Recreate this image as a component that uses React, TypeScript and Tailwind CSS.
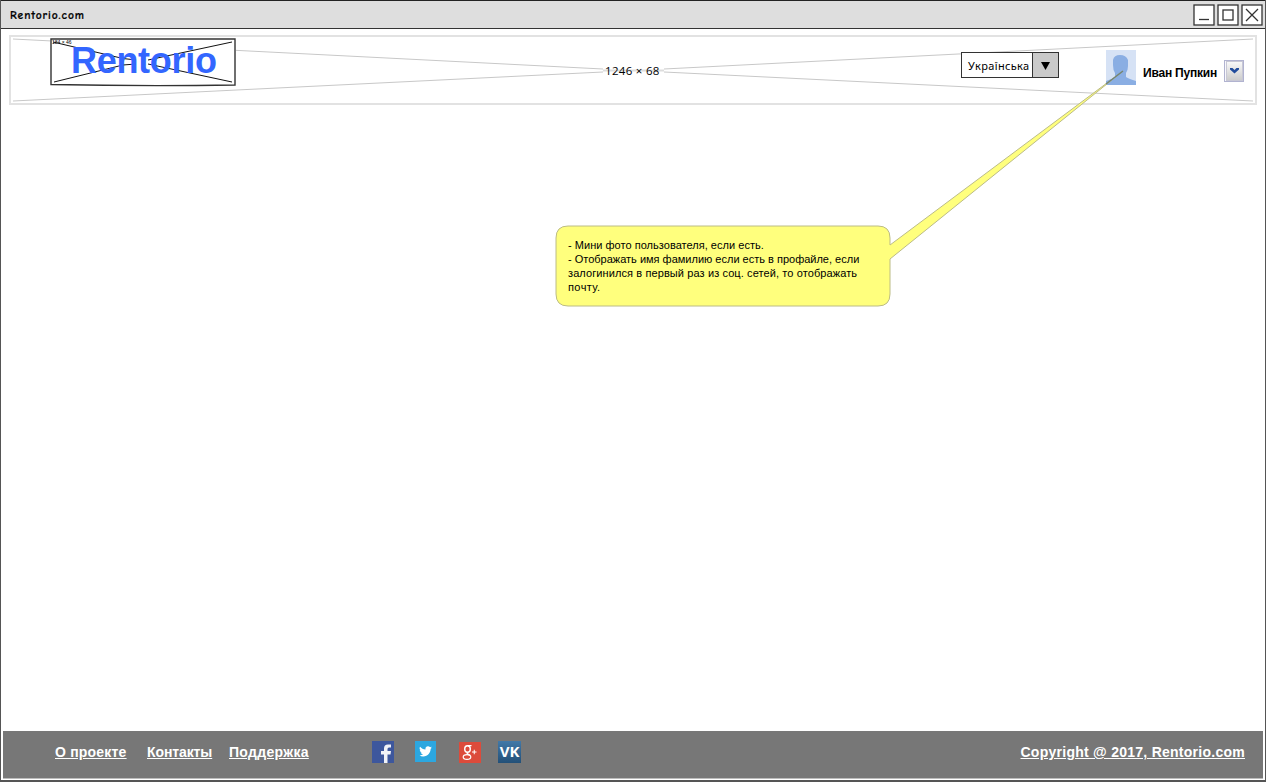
import React from "react";

function WindowButton({ kind }: { kind: "min" | "max" | "close" }) {
  return (
    <svg width="22" height="22" viewBox="0 0 22 22" fill="none" stroke="#333" strokeWidth="1.3">
      <rect x="1" y="1" width="20" height="20" fill="#fff" />
      {kind === "min" && <path d="M6 15.5H16" />}
      {kind === "max" && <rect x="6" y="6" width="10" height="10" />}
      {kind === "close" && <path d="M5 5L17 17M17 5L5 17" />}
    </svg>
  );
}

function TitleBar() {
  return (
    <div className="flex h-[29px] items-center justify-between border-t border-b border-t-[#222] border-b-[#333] bg-[#dedede] pr-[2px] pl-[9px]">
      <span className="pt-[3px] font-['Comic_Neue','Open_Sans',sans-serif] text-[11.5px] leading-[14px] font-bold tracking-[0.9px] text-black [-webkit-text-stroke:0.2px_black]">
        Rentorio.com
      </span>
      <div className="flex gap-[2px]">
        <WindowButton kind="min" />
        <WindowButton kind="max" />
        <WindowButton kind="close" />
      </div>
    </div>
  );
}

function Logo() {
  return (
    <div className="relative h-[48px] w-[186px] bg-white">
      <svg className="absolute inset-0" width="186" height="49" fill="none" stroke="#111" strokeWidth="1">
        <path d="M3 4L73 20.500L86 22M98 22L182 4M4 44L73 27L86 26M98 26L182 44" />
        <path d="M1 1L185 1L185 47Q95 48.5 1 46.5Z" stroke="#333" strokeWidth="1.4" />
      </svg>
      <span className="absolute top-[2px] left-[2px] font-['Liberation_Sans',sans-serif] text-[5px] leading-[5px] text-black">184 × 46</span>
      <span className="absolute top-[2px] left-[21px] font-['Liberation_Sans',sans-serif] text-[36px] leading-[41px] font-bold tracking-[-0.3px] text-[#3366ff]">
        Rentorio
      </span>
    </div>
  );
}

function Header() {
  return (
    <header className="relative mx-[8px] mt-[6px] flex h-[70px] items-start border-2 border-[#e2e2e2] pl-[39px]">
      <svg className="absolute -top-[2px] -left-[2px]" width="1248" height="70" fill="none" stroke="#c8c8c8">
        <path d="M4 4L594 34M655 34L1244 4M4 66L594 37M655 37L1244 66" />
        <path d="M594 35.500H655" stroke="#ddd" strokeWidth="2" />
      </svg>
      <div className="relative mt-[1px]"><Logo /></div>
      <span className="relative mt-[25px] ml-[369px] w-[59px] font-['Open_Sans',sans-serif] text-[11.5px] leading-[17px] tracking-[0.3px] whitespace-nowrap text-black">
        1246 × 68
      </span>
      <div className="relative mt-[15px] ml-[297px] flex h-[26px] w-[98px] items-center border border-[#333] bg-white">
        <span className="w-[70px] pt-[2px] pl-[6px] font-['Noto_Sans',sans-serif] text-[11px] leading-[16px] tracking-[0.35px] whitespace-nowrap text-black">Українська</span>
        <span className="flex h-full flex-1 items-center justify-center border-l border-[#333] bg-[#cacaca]">
          <svg className="mt-[2px]" width="10" height="8"><path d="M0 0H9L4.5 8Z" /></svg>
        </span>
      </div>
      <svg className="relative mt-[13px] ml-[47px]" width="30" height="35">
        <rect width="30" height="35" fill="#d6e2f5" />
        <path d="M0 35V31Q5 29 9 28V23Q7 20 7 15V10Q8 5 14 5Q20 5 22 10V16Q22 20 20 23V27Q23 29 30 31V35Z" fill="#8aaee3" />
      </svg>
      <span className="relative mt-[27px] ml-[7px] w-[75px] font-['Liberation_Sans',sans-serif] text-[12px] leading-[18px] font-bold tracking-[-0.2px] whitespace-nowrap text-black">
        Иван Пупкин
      </span>
      <svg className="relative mt-[23px] ml-[6px]" width="20" height="22">
        <defs>
          <linearGradient id="arrowFace" x2="0" y2="1"><stop stopColor="#fafafa" /><stop offset="1" stopColor="#cbcbcb" /></linearGradient>
        </defs>
        <rect x=".5" y=".5" width="19" height="21" fill="#f8f8fc" stroke="#b1b3d0" />
        <rect x="2.5" y="1.5" width="16" height="19" fill="url(#arrowFace)" stroke="#c8c8d5" />
        <path d="M6 8H8.500L10.500 10L12.500 8H15V9.500L10.500 13.500L6 9.500Z" fill="#214c9c" />
      </svg>
    </header>
  );
}

function Note() {
  return (
    <>
      <svg className="pointer-events-none absolute top-0 -left-px" width="1266" height="782">
        <path
          d="M568 226H878Q890 226 890 238V245L1123 71L890 259V294Q890 306 878 306H568Q556 306 556 294V238Q556 226 568 226Z"
          fill="#ffff7d"
          stroke="#bcbc86"
        />
        <path d="M1106 84L1123 71" stroke="#718377" strokeWidth="1.5" />
      </svg>
      <p className="absolute top-[238px] left-[567px] font-['Liberation_Sans',sans-serif] text-[11px] leading-[14px] whitespace-nowrap text-black">
        <span className="block tracking-[0.03px]">- Мини фото пользователя, если есть.</span>
        <span className="block">- Отображать имя фамилию если есть в профайле, если</span>
        <span className="block tracking-[0.1px]">залогинился в первый раз из соц. сетей, то отображать</span>
        <span className="block tracking-[0.4px]">почту.</span>
      </p>
    </>
  );
}

function Footer() {
  return (
    <footer className="mx-[2px] mb-px flex h-[48px] items-start border-b border-[#bbb] bg-[#777] pt-[10px] font-['Liberation_Sans',sans-serif] text-[14px] leading-[22px] font-bold whitespace-nowrap text-white">
      <a className="ml-[52px] w-[92px]"><span className="tracking-[0.2px] underline">О проекте</span></a>
      <a className="w-[82px]"><span className="tracking-[-0.1px] underline">Контакты</span></a>
      <a className="w-[143px]"><span className="tracking-[0.3px] underline">Поддержка</span></a>
      <svg width="22" height="22" viewBox="0 0 22 22">
        <rect width="22" height="22" fill="#3d579d" />
        <path d="M12 22V13.500H9V10H12V7.500Q12 3.500 16 3.500H19V6.500H17Q15.500 6.500 15.500 8V10H19L18.500 13.500H15.500V22Z" fill="#f0f2f7" />
      </svg>
      <svg className="ml-[21px]" width="21" height="21" viewBox="0 0 21 21">
        <rect width="21" height="21" fill="#2ca7e0" />
        <path transform="translate(4.2 4) scale(.53)" fill="#fff" d="M23.950 4.570a10 10 0 01-2.820.78 4.960 4.960 0 002.160-2.730c-.95.550-2 .960-3.130 1.180a4.920 4.920 0 00-8.380 4.480C7.690 8.100 4.070 6.130 1.640 3.160a4.820 4.820 0 001.520 6.580 4.900 4.900 0 01-2.230-.62v.06a4.920 4.920 0 003.950 4.830 5 5 0 01-2.210.08 4.940 4.940 0 004.600 3.420A9.870 9.870 0 010 19.540a13.990 13.990 0 007.560 2.210c9.050 0 14-7.500 14-13.980v-.64a9.930 9.930 0 002.390-2.560z" />
      </svg>
      <svg className="mt-px ml-[23px]" width="22" height="21" viewBox="0 0 22 21" fill="none" stroke="#fff">
        <rect width="22" height="21" fill="#dc4b3b" stroke="none" />
        <ellipse cx="8.500" cy="7" rx="2.800" ry="3.200" strokeWidth="1.400" />
        <path d="M8.500 3.700H12.500M8.500 10.200C7 11.500 9.500 12 11 13.500" strokeWidth="1.200" />
        <ellipse cx="8" cy="15" rx="3.800" ry="2.400" strokeWidth="1.200" />
        <path d="M13 10H17.500M15.250 7.750V12.250" strokeWidth="1" />
      </svg>
      <span className="ml-[17px] flex h-[22px] w-[23px] items-center justify-center bg-linear-to-b from-[#4279a8] to-[#235078] pb-[2px] font-['Open_Sans',sans-serif] text-[15px] leading-[20px] font-bold tracking-[-0.2px]">
        VK
      </span>
      <a className="mr-[18px] ml-auto tracking-[0.26px] underline">Copyright @ 2017, Rentorio.com</a>
    </footer>
  );
}

export default function App() {
  return (
    <div className="relative flex h-[782px] w-[1266px] flex-col overflow-hidden border-r border-b-2 border-l border-[#555] bg-white">
      <TitleBar />
      <Header />
      <main className="flex-1" />
      <Footer />
      <Note />
    </div>
  );
}
